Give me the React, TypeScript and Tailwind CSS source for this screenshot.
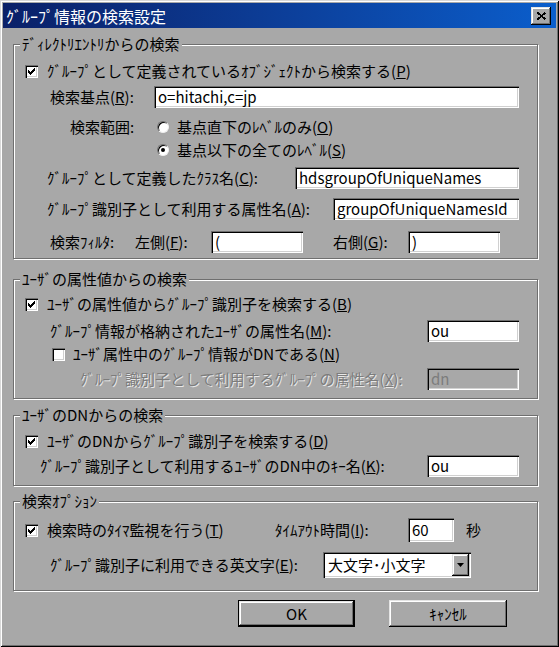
import { ReactNode } from "react";

const raised =
  "shadow-[inset_-1px_-1px_0_#000,inset_1px_1px_0_#e4e4e4,inset_-2px_-2px_0_#6f6f6f,inset_2px_2px_0_#fff]";
const sunken =
  "shadow-[inset_1px_1px_0_#6f6f6f,inset_2px_2px_0_#000,inset_-1px_-1px_0_#fff,inset_-2px_-2px_0_#d0d0d0]";

const Field = ({
  value,
  className = "",
  disabled = false,
}: {
  value: string;
  className?: string;
  disabled?: boolean;
}) => (
  <div
    className={`${sunken} ${
      disabled ? "bg-[#a8a8a8] text-[#7c7c7c]" : "bg-white text-black"
    } flex h-[22px] shrink-0 items-center overflow-hidden whitespace-nowrap pl-[4px] ${className}`}
  >
    {value}
  </div>
);

const Check = ({ checked = false }: { checked?: boolean }) => (
  <div className={`${sunken} flex h-[13px] w-[13px] shrink-0 items-center justify-center bg-white`}>
    {checked && (
      <svg width="7" height="7" viewBox="0 0 7 7" shapeRendering="crispEdges">
        <rect x="6" y="0" width="1" height="1" />
        <rect x="5" y="1" width="2" height="1" />
        <rect x="0" y="2" width="1" height="1" />
        <rect x="4" y="2" width="3" height="1" />
        <rect x="0" y="3" width="2" height="1" />
        <rect x="3" y="3" width="3" height="1" />
        <rect x="0" y="4" width="5" height="1" />
        <rect x="1" y="5" width="3" height="1" />
        <rect x="2" y="6" width="1" height="1" />
      </svg>
    )}
  </div>
);

const Radio = ({ checked = false }: { checked?: boolean }) => (
  <div className="flex h-[12px] w-[12px] shrink-0 items-center justify-center rounded-full border border-t-[#6f6f6f] border-l-[#6f6f6f] border-r-[#f0f0f0] border-b-[#f0f0f0] bg-white shadow-[inset_1px_1px_0_#000]">
    {checked && <div className="h-[4px] w-[4px] rounded-full bg-black" />}
  </div>
);

const Group = ({
  title,
  className = "",
  children,
}: {
  title: string;
  className?: string;
  children: ReactNode;
}) => (
  <fieldset
    className={`ml-[13px] w-[525px] min-w-0 border border-[#6f6f6f] p-0 shadow-[inset_1px_1px_0_#fff,1px_1px_0_#fff] ${className}`}
  >
    <legend className="ml-[6px] h-[20px] bg-[#a8a8a8] px-[2px] leading-[20px]">{title}</legend>
    {children}
  </fieldset>
);

export default function App() {
  return (
    <div className="flex h-[647px] w-[559px] flex-col overflow-hidden bg-[#a8a8a8] pt-[3px] font-['Noto_Sans_CJK_JP',sans-serif] text-[15px] leading-[20px] text-black shadow-[inset_1px_1px_0_#d8d8d8,inset_-1px_-1px_0_#000,inset_2px_2px_0_#fff,inset_-2px_-2px_0_#6f6f6f]">
      <div className="mx-[3px] flex h-[25px] shrink-0 items-center bg-linear-to-r from-[#0a2068] to-[#0a5ecc] pl-[3px] pr-[5px] text-[16px] text-white">
        <span>ｸﾞﾙｰﾌﾟ情報の検索設定</span>
        <div className={`${raised} ml-auto flex h-[18px] w-[20px] items-center justify-center bg-[#a8a8a8]`}>
          <svg width="9" height="8" viewBox="0 0 9 8" shapeRendering="crispEdges">
            <path d="M0.5 0.5 L8.5 7.5 M8.5 0.5 L0.5 7.5" stroke="#000" strokeWidth="1.8" />
          </svg>
        </div>
      </div>

      <Group title="ﾃﾞｨﾚｸﾄﾘｴﾝﾄﾘからの検索" className="mt-[6px]">
        <div className="flex flex-col pb-[5px]">
          <div className="mt-[7px] flex h-[20px] items-center pl-[11px]">
            <Check checked />
            <span className="ml-[9px] whitespace-nowrap">
              ｸﾞﾙｰﾌﾟとして定義されているｵﾌﾞｼﾞｪｸﾄから検索する(<u>P</u>)
            </span>
          </div>
          <div className="mt-[5px] flex h-[22px] items-center pl-[36px]">
            <span className="w-[104px] shrink-0 whitespace-nowrap">
              検索基点(<u>R</u>):
            </span>
            <Field value="o=hitachi,c=jp" className="w-[365px]" />
          </div>
          <div className="mt-[9px] flex h-[20px] items-center pl-[56px]">
            <span className="w-[87px] shrink-0 whitespace-nowrap">検索範囲:</span>
            <Radio />
            <span className="ml-[8px] whitespace-nowrap">
              基点直下のﾚﾍﾞﾙのみ(<u>O</u>)
            </span>
          </div>
          <div className="mt-[3px] flex h-[20px] items-center pl-[143px]">
            <Radio checked />
            <span className="ml-[8px] whitespace-nowrap">
              基点以下の全てのﾚﾍﾞﾙ(<u>S</u>)
            </span>
          </div>
          <div className="mt-[7px] flex h-[22px] items-center pl-[33px]">
            <span className="w-[248px] shrink-0 whitespace-nowrap">
              ｸﾞﾙｰﾌﾟとして定義したｸﾗｽ名(<u>C</u>):
            </span>
            <Field value="hdsgroupOfUniqueNames" className="w-[224px]" />
          </div>
          <div className="mt-[9px] flex h-[22px] items-center pl-[33px]">
            <span className="w-[286px] shrink-0 whitespace-nowrap">
              ｸﾞﾙｰﾌﾟ識別子として利用する属性名(<u>A</u>):
            </span>
            <Field value="groupOfUniqueNamesId" className="w-[186px]" />
          </div>
          <div className="mt-[11px] flex h-[22px] items-center pl-[36px]">
            <span className="w-[85px] shrink-0 whitespace-nowrap">検索ﾌｨﾙﾀ:</span>
            <span className="w-[76px] shrink-0 whitespace-nowrap">
              左側(<u>F</u>):
            </span>
            <Field value="(" className="w-[92px]" />
            <span className="w-[30px] shrink-0" />
            <span className="w-[75px] shrink-0 whitespace-nowrap">
              右側(<u>G</u>):
            </span>
            <Field value=")" className="w-[92px]" />
          </div>
        </div>
      </Group>

      <Group title="ﾕｰｻﾞの属性値からの検索" className="mt-[10px]">
        <div className="flex flex-col pb-[8px]">
          <div className="mt-[5px] flex h-[20px] items-center pl-[11px]">
            <Check checked />
            <span className="ml-[9px] whitespace-nowrap">
              ﾕｰｻﾞの属性値からｸﾞﾙｰﾌﾟ識別子を検索する(<u>B</u>)
            </span>
          </div>
          <div className="mt-[6px] flex h-[22px] items-center pl-[36px]">
            <span className="w-[377px] shrink-0 whitespace-nowrap">
              ｸﾞﾙｰﾌﾟ情報が格納されたﾕｰｻﾞの属性名(<u>M</u>):
            </span>
            <Field value="ou" className="w-[92px]" />
          </div>
          <div className="mt-[2px] flex h-[20px] items-center pl-[38px]">
            <Check />
            <span className="ml-[8px] whitespace-nowrap">
              ﾕｰｻﾞ属性中のｸﾞﾙｰﾌﾟ情報がDNである(<u>N</u>)
            </span>
          </div>
          <div className="mt-[4px] flex h-[22px] items-center pl-[66px]">
            <span className="w-[347px] shrink-0 whitespace-nowrap text-[#7c7c7c] [text-shadow:1px_1px_0_#e8e8e8]">
              ｸﾞﾙｰﾌﾟ識別子として利用するｸﾞﾙｰﾌﾟの属性名(<u>X</u>):
            </span>
            <Field value="dn" className="w-[92px]" disabled />
          </div>
        </div>
      </Group>

      <Group title="ﾕｰｻﾞのDNからの検索" className="mt-[6px]">
        <div className="flex flex-col pb-[8px]">
          <div className="mt-[6px] flex h-[20px] items-center pl-[11px]">
            <Check checked />
            <span className="ml-[9px] whitespace-nowrap">
              ﾕｰｻﾞのDNからｸﾞﾙｰﾌﾟ識別子を検索する(<u>D</u>)
            </span>
          </div>
          <div className="mt-[4px] flex h-[22px] items-center pl-[26px]">
            <span className="w-[387px] shrink-0 whitespace-nowrap">
              ｸﾞﾙｰﾌﾟ識別子として利用するﾕｰｻﾞのDN中のｷｰ名(<u>K</u>):
            </span>
            <Field value="ou" className="w-[92px]" />
          </div>
        </div>
      </Group>

      <Group title="検索ｵﾌﾟｼｮﾝ" className="mt-[5px]">
        <div className="flex flex-col pb-[12px]">
          <div className="mt-[7px] flex h-[24px] items-center pl-[11px]">
            <Check checked />
            <span className="ml-[9px] w-[228px] shrink-0 whitespace-nowrap">
              検索時のﾀｲﾏ監視を行う(<u>T</u>)
            </span>
            <span className="w-[133px] shrink-0 whitespace-nowrap">
              ﾀｲﾑｱｳﾄ時間(<u>I</u>):
            </span>
            <Field value="60" className="!h-[24px] w-[46px]" />
            <span className="ml-[12px]">秒</span>
          </div>
          <div className="mt-[10px] flex h-[26px] items-center pl-[36px]">
            <span className="w-[273px] shrink-0 whitespace-nowrap">
              ｸﾞﾙｰﾌﾟ識別子に利用できる英文字(<u>E</u>):
            </span>
            <div className={`${sunken} flex h-[26px] w-[148px] items-center bg-white p-[2px]`}>
              <span className="flex-1 whitespace-nowrap pl-[3px]">大文字･小文字</span>
              <div className={`${raised} flex h-[22px] w-[17px] items-center justify-center bg-[#a8a8a8]`}>
                <svg width="7" height="4" viewBox="0 0 7 4">
                  <path d="M0 0h7L3.5 4z" fill="#000" />
                </svg>
              </div>
            </div>
          </div>
        </div>
      </Group>

      <div className="mt-[9px] flex pl-[238px]">
        <button className={`${raised} h-[27px] w-[117px] border border-black bg-[#a8a8a8]`}>OK</button>
        <button className={`${raised} ml-[34px] h-[27px] w-[118px] bg-[#a8a8a8]`}>ｷｬﾝｾﾙ</button>
      </div>
    </div>
  );
}
